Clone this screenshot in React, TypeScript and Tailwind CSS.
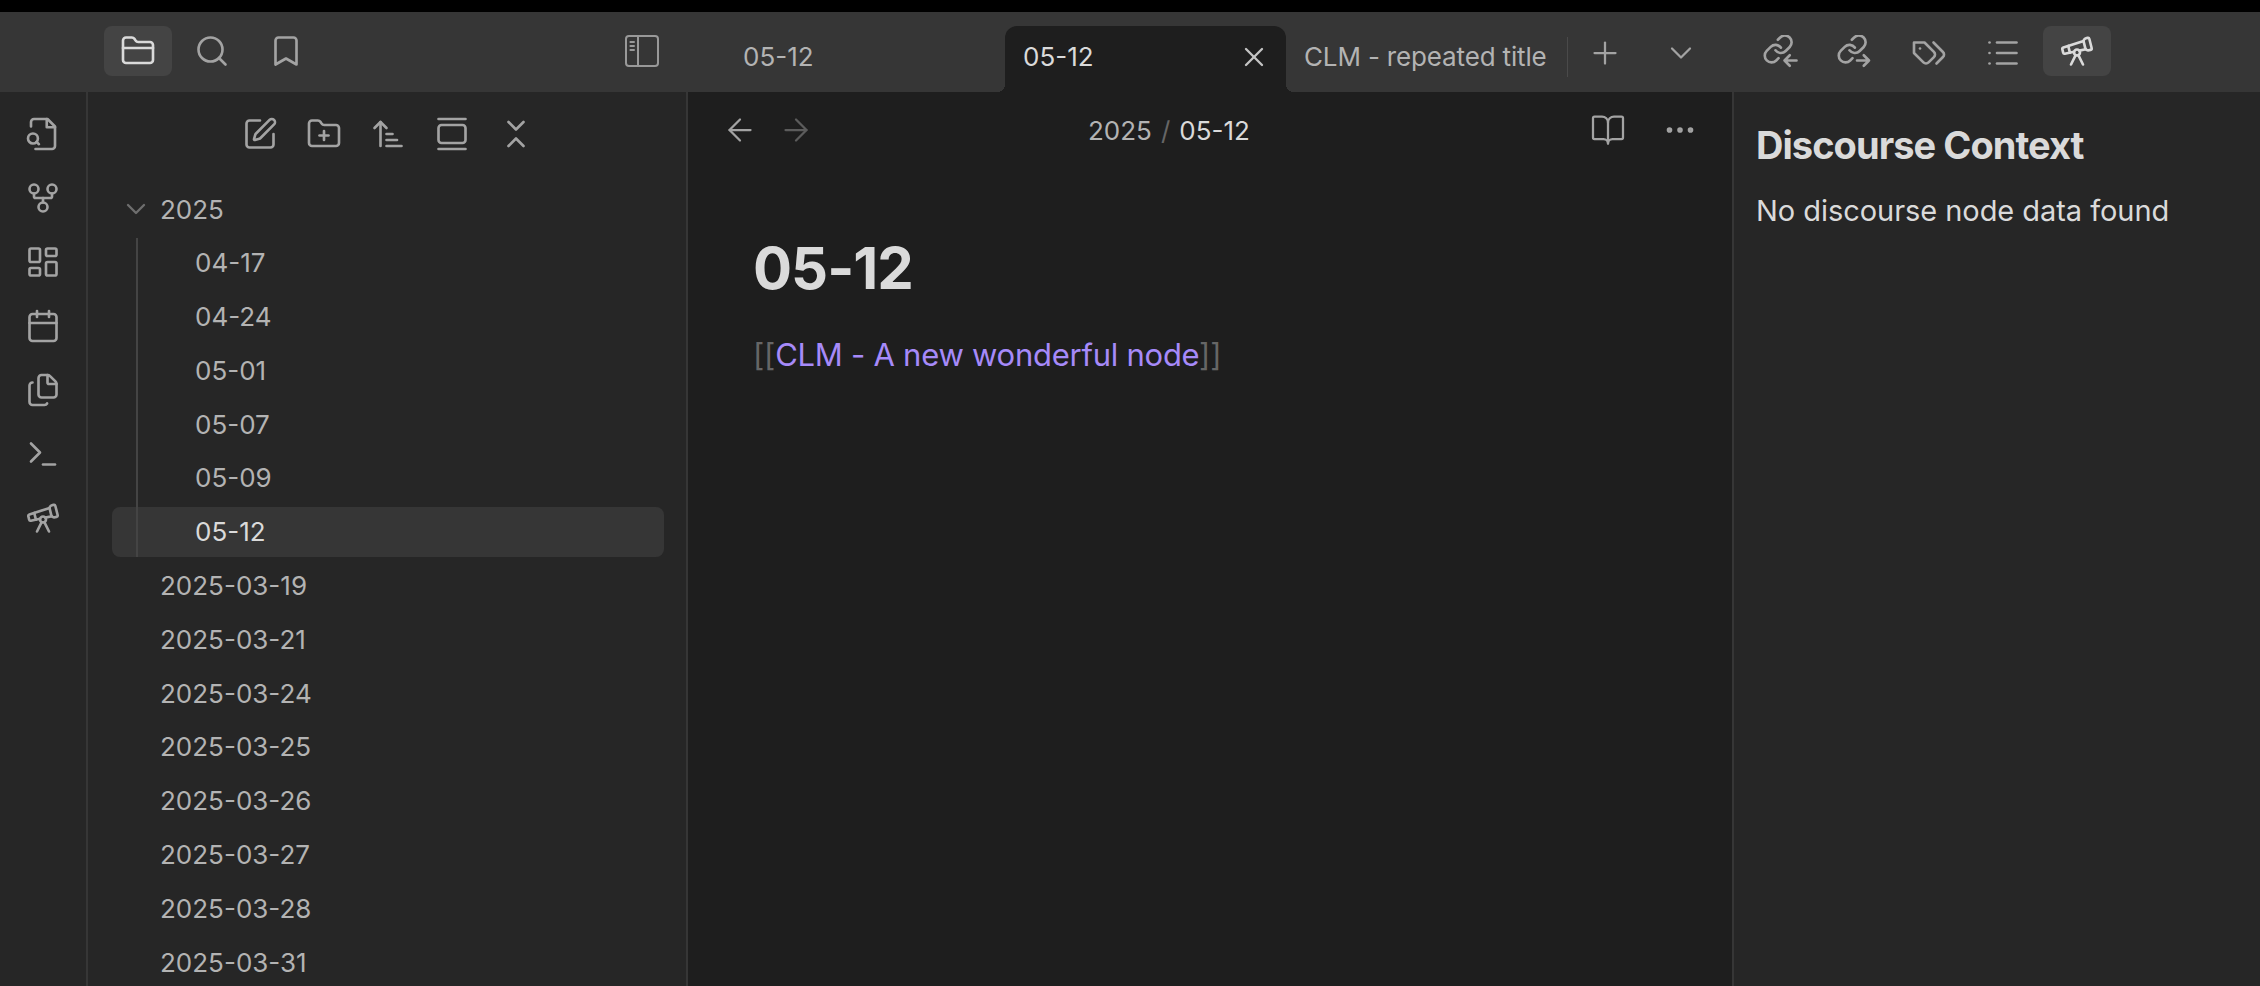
import {
  ArrowLeft,
  ArrowRight,
  ArrowUpNarrowWide,
  BookOpen,
  Bookmark,
  Calendar,
  ChevronDown,
  ChevronsDownUp,
  Ellipsis,
  Files,
  FolderClosed,
  FolderPlus,
  GalleryVertical,
  GitFork,
  LayoutDashboard,
  List,
  Plus,
  Search,
  SquarePen,
  Telescope,
  Terminal,
  X,
} from "lucide-react";

const ribbonIcons = [GitFork, LayoutDashboard, Calendar, Files, Terminal, Telescope];
const toolbarIcons = [SquarePen, FolderPlus, ArrowUpNarrowWide, GalleryVertical, ChevronsDownUp];

const children = ["04-17", "04-24", "05-01", "05-07", "05-09", "05-12"];
const dailies = [
  "2025-03-19",
  "2025-03-21",
  "2025-03-24",
  "2025-03-25",
  "2025-03-26",
  "2025-03-27",
  "2025-03-28",
  "2025-03-31",
];

// 链接图标，箭头方向不同
function LinkArrow({ incoming }: { incoming: boolean }) {
  return (
    <svg width="36" height="36" viewBox="0 0 24 24" fill="none" stroke="currentColor" strokeWidth="1.75" strokeLinecap="round" strokeLinejoin="round">
      <g transform="translate(0 -1.5) scale(0.9)" strokeWidth="1.95">
        <path d="M10 13a5 5 0 0 0 7.54.54l3-3a5 5 0 0 0-7.07-7.07l-1.72 1.71" />
        <path d="M14 11a5 5 0 0 0-7.54-.54l-3 3a5 5 0 0 0 7.07 7.07l1.71-1.71" />
      </g>
      {incoming ? <path d="M23 17h-8m3.5-3.5L15 17l3.5 3.5" /> : <path d="M14 17h8m-3.5-3.5L22 17l-3.5 3.5" />}
    </svg>
  );
}

function FileSearchIcon() {
  return (
    <svg width="36" height="36" viewBox="0 0 24 24" fill="none" stroke="currentColor" strokeWidth="1.75" strokeLinecap="round" strokeLinejoin="round">
      <path d="M7 22h11a2 2 0 0 0 2-2V7l-5-5H6a2 2 0 0 0-2 2v3" />
      <path d="M14.5 2v5.5H20" />
      <circle cx="5.3" cy="15" r="3.3" />
      <path d="m9.3 18.8-1.7-1.6" />
    </svg>
  );
}

function TagsIcon() {
  return (
    <svg width="36" height="36" viewBox="0 0 24 24" fill="none" stroke="currentColor" strokeWidth="1.75" strokeLinecap="round" strokeLinejoin="round">
      <path d="M9 5H2v7l6.29 6.29c.94.94 2.48.94 3.42 0l3.58-3.58c.94-.94.94-2.48 0-3.42L9 5Z" />
      <path d="M6 9.01V9" />
      <path d="m15 5 6.3 6.3a2.4 2.4 0 0 1 0 3.4L17 19" />
    </svg>
  );
}

function SidebarToggle() {
  return (
    <svg width="36" height="36" viewBox="0 0 18 18" fill="none" stroke="currentColor" strokeWidth="1" strokeLinecap="round">
      <rect x="1" y="1.5" width="16" height="15" rx="1.5" />
      <path d="M7 1.5v15M3.2 4.5h1.8M3.2 6.5h1.8M3.2 8.5h1.8" />
    </svg>
  );
}

function TreeRow({ label, indent, active }: { label: string; indent?: boolean; active?: boolean }) {
  return (
    <div
      className={`flex h-[50px] items-center rounded-lg ${indent ? "pl-[83px]" : "pl-[48px]"} ${
        active ? "bg-[#363636] text-[#dadada]" : "text-[#b3b3b3]"
      }`}
    >
      {label}
    </div>
  );
}

export default function App() {
  return (
    <div
      className="flex h-[986px] flex-col overflow-hidden bg-[#1e1e1e] text-[26px] text-[#b3b3b3]"
      style={{ fontFamily: "Inter, sans-serif" }}
    >
      <div className="h-3 flex-none bg-black" />

      {/* 顶部标签栏 */}
      <header className="flex h-20 flex-none bg-[#363636]">
        <div className="flex w-[688px] flex-none pl-[104px] pr-7 pt-[14px]">
          <div className="flex gap-[6px]">
            <button className="flex h-[50px] w-[68px] items-center justify-center rounded-lg bg-[#444444] text-[#dadada]">
              <FolderClosed size={36} strokeWidth={1.75} />
            </button>
            <button className="flex h-[50px] w-[68px] items-center justify-center">
              <Search size={36} strokeWidth={1.75} className="text-[#a3a3a3]" />
            </button>
            <button className="flex h-[50px] w-[68px] items-center justify-center">
              <Bookmark size={36} strokeWidth={1.75} className="text-[#a3a3a3]" />
            </button>
          </div>
          <div className="ml-auto flex h-[50px] items-center text-[#999999]">
            <SidebarToggle />
          </div>
        </div>

        <div className="flex w-[317px] flex-none items-center pl-[55px] pt-2">05-12</div>
        <div className="relative flex h-[66px] w-[281px] flex-none items-center justify-between self-end rounded-t-xl bg-[#1e1e1e] pb-[6px] pl-[18px] pr-4 text-[#dadada] before:absolute before:bottom-0 before:-left-2 before:h-2 before:w-2 before:bg-[radial-gradient(circle_at_0_0,transparent_8px,#1e1e1e_8px)] after:absolute after:bottom-0 after:-right-2 after:h-2 after:w-2 after:bg-[radial-gradient(circle_at_100%_0,transparent_8px,#1e1e1e_8px)]">
          <span>05-12</span>
          <X size={32} strokeWidth={1.75} className="mt-[2px] text-[#c4c4c4]" />
        </div>
        <div className="flex w-[281px] flex-none items-center whitespace-nowrap pl-[18px] pt-2 tracking-[-0.15px]">CLM - repeated title</div>
        <div className="mt-[25px] h-10 w-px flex-none bg-[#4a4a4a]" />
        <div className="flex flex-none items-start pl-[19px] pt-[23px] text-[#a3a3a3]">
          <Plus size={36} strokeWidth={1.5} />
          <ChevronDown size={36} strokeWidth={1.5} className="ml-10" />
        </div>
        <div className="ml-[63px] flex flex-none items-start pt-[23px] text-[#a3a3a3]">
          <LinkArrow incoming />
          <div className="ml-[38px]">
            <LinkArrow incoming={false} />
          </div>
          <div className="ml-[39px]">
            <TagsIcon />
          </div>
          <List size={36} strokeWidth={1.75} className="ml-[38px]" />
        </div>
        <div className="ml-[22px] mt-[14px] flex h-[50px] w-[68px] flex-none items-center justify-center rounded-lg bg-[#444444] text-[#dadada]">
          <Telescope size={36} strokeWidth={1.75} />
        </div>
      </header>

      <div className="flex min-h-0 flex-1">
        {/* 左侧图标栏 */}
        <nav className="flex w-[88px] flex-none flex-col items-center gap-7 border-r-2 border-[#363636] bg-[#262626] pt-6 text-[#a3a3a3]">
          <FileSearchIcon />
          {ribbonIcons.map((Icon, i) => (
            <Icon key={i} size={36} strokeWidth={1.75} />
          ))}
        </nav>

        {/* 文件列表 */}
        <aside className="w-[600px] flex-none border-r-2 border-[#363636] bg-[#262626]">
          <div className="flex justify-center gap-7 pl-[2px] pt-6 text-[#a3a3a3]">
            {toolbarIcons.map((Icon, i) => (
              <Icon key={i} size={36} strokeWidth={1.75} />
            ))}
          </div>
          <div className="relative ml-6 mr-[22px] mt-[32px] flex flex-col gap-[3.8px]">
            <div className="relative flex h-[50px] items-center pl-[48px]">
              <ChevronDown size={32} strokeWidth={1.75} className="absolute left-2 text-[#6e6e6e]" />
              2025
            </div>
            {children.map((name) => (
              <TreeRow key={name} label={name} indent active={name === "05-12"} />
            ))}
            {dailies.map((name) => (
              <TreeRow key={name} label={name} />
            ))}
            <div className="absolute left-[24px] top-[54px] h-[319px] w-0.5 bg-[#444444]" />
          </div>
        </aside>

        {/* 编辑区 */}
        <main className="w-[1044px] flex-none bg-[#1e1e1e]">
          <div className="flex items-center pl-[34px] pr-[34px] pt-[19px]">
            <ArrowLeft size={36} strokeWidth={1.5} className="-mt-[2px] text-[#a3a3a3]" />
            <ArrowRight size={36} strokeWidth={1.5} className="-mt-[2px] ml-5 text-[#5c5c5c]" />
            <div className="ml-[274px] flex items-center">
              <span>2025</span>
              <span className="mx-[9px] text-[#666666]">/</span>
              <span className="text-[#dadada]">05-12</span>
            </div>
            <div className="-mt-[2px] ml-auto flex items-center gap-9 text-[#a3a3a3]">
              <BookOpen size={36} strokeWidth={1.5} />
              <Ellipsis size={36} strokeWidth={1.75} />
            </div>
          </div>
          <div className="px-[65px] pt-[82px]">
            <h1 className="text-[58px] font-bold leading-[72px] tracking-[-1px] text-[#dadada]">05-12</h1>
            <p className="mt-[27px] text-[31px] leading-[48px] tracking-[-0.25px]">
              <span className="text-[#666666]">[[</span>
              <span className="text-[#a68af9]">CLM - A new wonderful node</span>
              <span className="text-[#666666]">]]</span>
            </p>
          </div>
        </main>

        {/* 右侧面板 */}
        <aside className="flex-1 border-l-2 border-[#363636] bg-[#262626] pl-[22px] pt-[28px] text-[#dadada]">
          <h4 className="text-[38px] font-bold leading-[50px] tracking-tight">Discourse Context</h4>
          <p className="mt-[19px] text-[29px] leading-[44px] tracking-[-0.05px]">No discourse node data found</p>
        </aside>
      </div>
    </div>
  );
}
